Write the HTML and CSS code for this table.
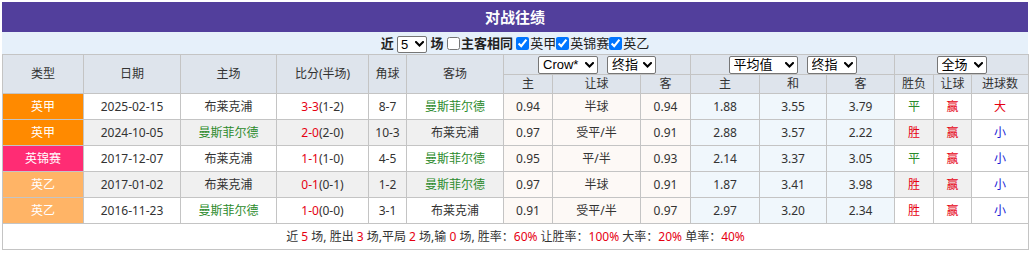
FILE: index.html
```html
<!DOCTYPE html>
<html lang="zh-CN">
<head>
<meta charset="utf-8">
<title>对战往绩</title>
<link rel="stylesheet" href="styles.css">
</head>
<body>
<div class="wrap">
  <div class="title">对战往绩</div>
  <div class="filter">
    <b>近</b> <span class="selw"><select class="sel sel-n"><option>5</option><option>10</option></select><svg class="chev" viewBox="0 0 9 6" width="9" height="6"><polyline points="1,1 4.5,4.5 8,1"/></svg></span> <b>场</b> <label class="chk"><input type="checkbox"><b>主客相同</b></label> <label class="chk"><input type="checkbox" checked>英甲</label><label class="chk"><input type="checkbox" checked>英锦赛</label><label class="chk"><input type="checkbox" checked>英乙</label>
  </div>
  <table class="hist">
    <colgroup>
      <col class="c81"><col class="c97"><col class="c96"><col class="c92"><col class="c38"><col class="c97">
      <col class="c49"><col class="c88"><col class="c50">
      <col class="c69"><col class="c67"><col class="c68">
      <col class="c39"><col class="c38"><col class="c57">
    </colgroup>
    <thead>
      <tr class="h1">
        <th rowspan="2">类型</th>
        <th rowspan="2">日期</th>
        <th rowspan="2">主场</th>
        <th rowspan="2">比分(半场)</th>
        <th rowspan="2">角球</th>
        <th rowspan="2">客场</th>
        <th colspan="3"><span class="selw gap"><select class="sel sel-crow"><option>Crow*</option></select><svg class="chev" viewBox="0 0 9 6" width="9" height="6"><polyline points="1,1 4.5,4.5 8,1"/></svg></span><span class="selw"><select class="sel sel-z"><option>终指</option></select><svg class="chev" viewBox="0 0 9 6" width="9" height="6"><polyline points="1,1 4.5,4.5 8,1"/></svg></span></th>
        <th colspan="3"><span class="selw gap"><select class="sel sel-avg"><option>平均值</option></select><svg class="chev" viewBox="0 0 9 6" width="9" height="6"><polyline points="1,1 4.5,4.5 8,1"/></svg></span><span class="selw"><select class="sel sel-z2"><option>终指</option></select><svg class="chev" viewBox="0 0 9 6" width="9" height="6"><polyline points="1,1 4.5,4.5 8,1"/></svg></span></th>
        <th colspan="3"><span class="selw"><select class="sel sel-all"><option>全场</option></select><svg class="chev" viewBox="0 0 9 6" width="9" height="6"><polyline points="1,1 4.5,4.5 8,1"/></svg></span></th>
      </tr>
      <tr class="h2">
        <th>主</th><th>让球</th><th>客</th>
        <th>主</th><th>和</th><th>客</th>
        <th>胜负</th><th>让球</th><th>进球数</th>
      </tr>
    </thead>
    <tbody>
      <tr class="odd">
        <td class="lg lg-epl">英甲</td><td>2025-02-15</td><td>布莱克浦</td><td><span class="red">3-3</span>(1-2)</td><td>8-7</td><td class="grn">曼斯菲尔德</td>
        <td class="o">0.94</td><td class="o">半球</td><td class="o">0.94</td>
        <td class="p">1.88</td><td class="p">3.55</td><td class="p">3.79</td>
        <td class="grn">平</td><td class="red">赢</td><td class="r red">大</td>
      </tr>
      <tr class="even">
        <td class="lg lg-epl">英甲</td><td>2024-10-05</td><td class="grn">曼斯菲尔德</td><td><span class="red">2-0</span>(2-0)</td><td>10-3</td><td>布莱克浦</td>
        <td class="o">0.97</td><td class="o">受平/半</td><td class="o">0.91</td>
        <td class="p">2.88</td><td class="p">3.57</td><td class="p">2.22</td>
        <td class="red">胜</td><td class="red">赢</td><td class="r blu">小</td>
      </tr>
      <tr class="odd">
        <td class="lg lg-cup">英锦赛</td><td>2017-12-07</td><td>布莱克浦</td><td><span class="red">1-1</span>(1-0)</td><td>4-5</td><td class="grn">曼斯菲尔德</td>
        <td class="o">0.95</td><td class="o">平/半</td><td class="o">0.93</td>
        <td class="p">2.14</td><td class="p">3.37</td><td class="p">3.05</td>
        <td class="grn">平</td><td class="red">赢</td><td class="r blu">小</td>
      </tr>
      <tr class="even">
        <td class="lg lg-l2">英乙</td><td>2017-01-02</td><td>布莱克浦</td><td><span class="red">0-1</span>(0-1)</td><td>1-2</td><td class="grn">曼斯菲尔德</td>
        <td class="o">0.97</td><td class="o">半球</td><td class="o">0.91</td>
        <td class="p">1.87</td><td class="p">3.41</td><td class="p">3.98</td>
        <td class="red">胜</td><td class="red">赢</td><td class="r blu">小</td>
      </tr>
      <tr class="odd">
        <td class="lg lg-l2">英乙</td><td>2016-11-23</td><td class="grn">曼斯菲尔德</td><td><span class="red">1-0</span>(0-0)</td><td>3-1</td><td>布莱克浦</td>
        <td class="o">0.91</td><td class="o">受平/半</td><td class="o">0.97</td>
        <td class="p">2.97</td><td class="p">3.20</td><td class="p">2.34</td>
        <td class="red">胜</td><td class="red">赢</td><td class="r blu">小</td>
      </tr>
    </tbody>
    <tfoot>
      <tr>
        <td colspan="15">近 <span class="red">5</span> 场, 胜出 <span class="red">3</span> 场,平局 <span class="red">2</span> 场,输 <span class="red">0</span> 场, 胜率：<span class="red">60%</span> 让胜率：<span class="red">100%</span> 大率：<span class="red">20%</span> 单率：<span class="red">40%</span></td>
      </tr>
    </tfoot>
  </table>
</div>
</body>
</html>
```
FILE: styles.css
```css
body {
  margin: 0;
  background: #fff;
  color: #333;
  font-family: "Noto Sans", "Noto Sans CJK SC", sans-serif;
  font-size: 12px;
}
.wrap {
  margin: 2px;
  width: 1026px;
}
.title {
  height: 30px;
  line-height: 30px;
  background: #523f9c;
  color: #fff;
  font-weight: bold;
  font-size: 15px;
  text-align: center;
}
.filter {
  height: 22px;
  line-height: 22px;
  background: #e6f0fa;
  text-align: center;
  font-size: 13px;
  color: #222;
}
.filter b { font-weight: bold; }
.chk input {
  margin: 0 1px 0 0;
  width: 13px;
  height: 13px;
  vertical-align: -2px;
}

.c81 { width: 81px; }
.c97 { width: 97px; }
.c96 { width: 96px; }
.c92 { width: 92px; }
.c38 { width: 38px; }
.c49 { width: 49px; }
.c88 { width: 88px; }
.c50 { width: 50px; }
.c69 { width: 69px; }
.c67 { width: 67px; }
.c68 { width: 68px; }
.c39 { width: 39px; }
.c57 { width: 57px; }

.selw {
  position: relative;
  display: inline-block;
  vertical-align: middle;
  line-height: 0;
}
.selw.gap { margin-right: 9px; }
.sel {
  -webkit-appearance: none;
  appearance: none;
  font-family: "Liberation Sans", "Noto Sans CJK SC", sans-serif;
  font-size: 13px;
  line-height: 16px;
  height: 18px;
  padding: 0 12px 0 4px;
  margin: 0;
  color: #000;
  background: #fff;
  border: 1px solid #767676;
  border-radius: 2px;
}
.chev {
  position: absolute;
  right: 4px;
  top: 6px;
  fill: none;
  stroke: #000;
  stroke-width: 2;
  stroke-linecap: square;
  pointer-events: none;
}
.sel-n { width: 30px; height: 17px; padding-left: 3px; }
.sel-n + .chev { top: 5px; right: 3px; }
.sel-crow { width: 60px; }
.sel-z { width: 49px; }
.sel-avg { width: 69px; }
.sel-z2 { width: 50px; }
.sel-all { width: 50px; }

.hist {
  width: 1026px;
  table-layout: fixed;
  border-collapse: collapse;
  border: 1px solid #c4c4c4;
}
.hist th, .hist td {
  border: 1px solid #c4c4c4;
  padding: 0;
  text-align: center;
  font-weight: normal;
  white-space: nowrap;
  overflow: hidden;
}
.hist th {
  background: #dee4ec;
  color: #333;
  line-height: 16px;
}
.h1 th { height: 19px; }
.h2 th { height: 18px; }
.hist tbody td {
  height: 25px;
  line-height: 16px;
}
.odd td { background: #fff; }
.even td { background: #f0f0f0; }
.hist td.o { background: #fdf9f6; }
.hist td.p { background: #f0f7fc; }
.hist td.r { background: #fff; }
.hist td.lg { color: #fff; }
.hist td.lg-epl { background: #ff8a00; }
.hist td.lg-cup { background: #ff2c74; }
.hist td.lg-l2 { background: #ffb466; }
.red { color: #e60012; }
.grn { color: #2b8a2b; }
.blu { color: #1a1ad6; }
.hist tfoot td {
  height: 25px;
  background: #fff;
  line-height: 16px;
}
```
